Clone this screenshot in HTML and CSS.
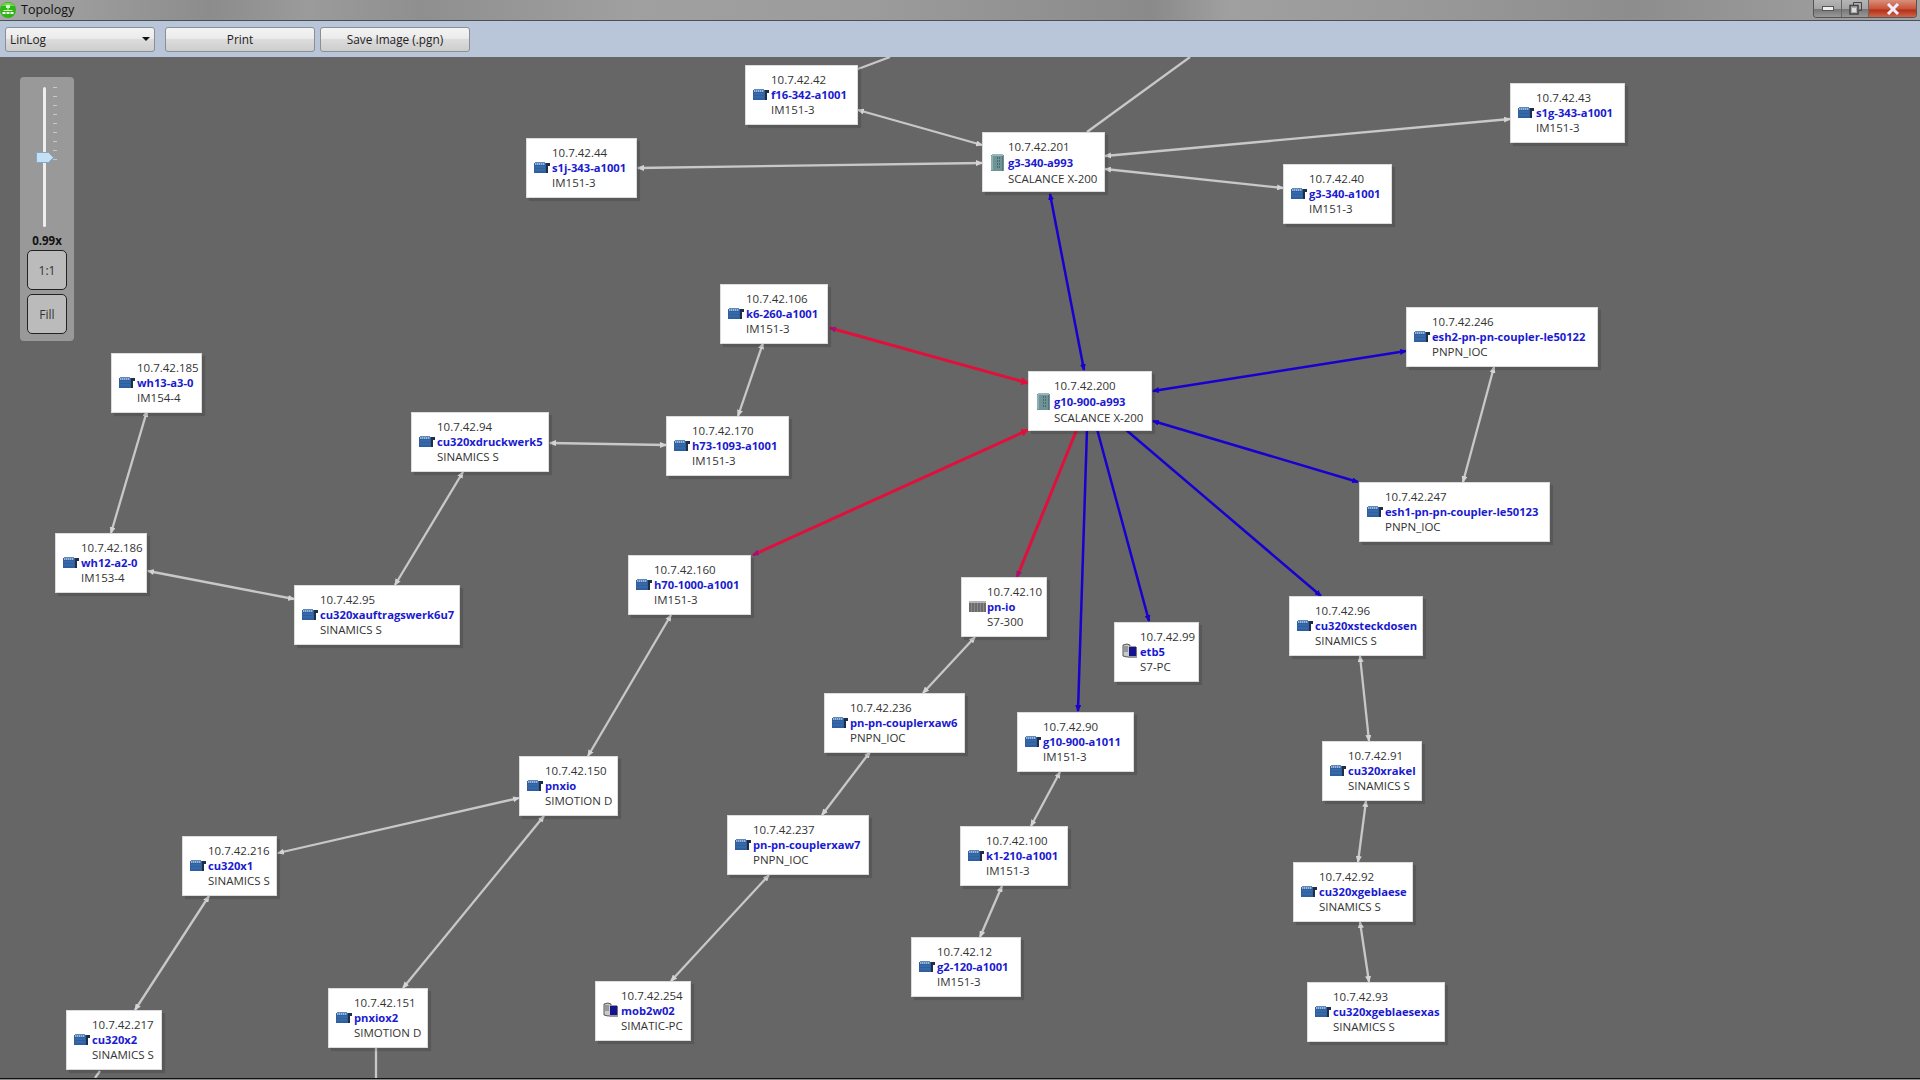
FILE: index.html
```html
<!DOCTYPE html>
<html>
<head>
    <meta charset="utf-8">
    <title>Topology</title>
    <link rel="stylesheet" href="styles.css">
</head>
<body>
<svg class="defs" width="0" height="0">
    <symbol id="ico-drive" viewBox="0 0 16 11">
        <rect x="0" y="1" width="12" height="10" fill="#2f5f9e"/>
        <rect x="1" y="0" width="10" height="3" fill="#5f88bd"/>
        <path d="M1 2h1M3 2h1M5 2h1M7 2h1M9 2h1" stroke="#dfe8f4" stroke-width="1"/>
        <path d="M1 5h10M1 8h10" stroke="#3f75b5" stroke-width="1"/>
        <path d="M12 1h4v3h-2v7h-2z" fill="#1d2f47"/>
    </symbol>
    <symbol id="ico-switch" viewBox="0 0 13 17">
        <rect x="0" y="1" width="13" height="16" fill="#6f9498"/>
        <rect x="1" y="0" width="11" height="2" fill="#9ab6b8"/>
        <path d="M1 2v14" stroke="#8fb0b3" stroke-width="2"/>
        <path d="M6 4h4M6 7h4M6 10h4M6 13h4" stroke="#2f3f42" stroke-width="1" stroke-dasharray="1 1"/>
        <path d="M11.5 2v15" stroke="#55767a" stroke-width="1"/>
    </symbol>
    <symbol id="ico-rack" viewBox="0 0 17 11">
        <rect x="0" y="0" width="17" height="11" fill="#8a8a8a"/>
        <path d="M1 2v9M4 2v9M7 2v9M10 2v9M13 2v9M16 2v9" stroke="#4f4f4f" stroke-width="1"/>
        <rect x="0" y="0" width="17" height="2" fill="#b5b5b5"/>
    </symbol>
    <symbol id="ico-pc" viewBox="0 0 16 16">
        <path d="M1 2l4-1 3 1v11l-3 1-4-1z" fill="#c9c9c9" stroke="#555" stroke-width="1"/>
        <path d="M2 4h4M2 6h4M2 8h4" stroke="#666" stroke-width="1"/>
        <rect x="7" y="4" width="7" height="9" fill="#14148c"/>
        <path d="M7 3h7v1H7zM6 13h9v2H6z" fill="#9a9a9a"/>
        <path d="M14.500 4v9" stroke="#777" stroke-width="1"/>
    </symbol>
</svg>

<header class="titlebar">
    <svg class="titlebar__icon" width="16" height="17" viewBox="0 0 16 17">
        <circle cx="8" cy="9" r="8" fill="#2fb516"/>
        <path d="M1.500 5a8 8 0 0 1 13 0z" fill="#6fdc48"/>
        <rect x="6" y="4" width="4" height="3" fill="#d8f5cc"/>
        <path d="M8 7v2M3.500 9.500h9" stroke="#d8f5cc" stroke-width="1"/>
        <path d="M2.500 11h3v2h-3zM6.500 11h3v2h-3zM10.500 11h3v2h-3z" fill="#f2fff0"/>
    </svg>
    <span class="titlebar__text">Topology</span>
    <div class="window-buttons">
        <div class="window-button">
            <svg width="12" height="5" viewBox="0 0 12 5"><rect x="0.500" y="0.500" width="11" height="4" fill="#eee" stroke="#555"/></svg>
        </div>
        <div class="window-button window-button--restore">
            <svg width="13" height="13" viewBox="0 0 13 13"><path d="M4.500 3V.5h8v8H10" fill="none" stroke="#444"/><rect x="1" y="3.500" width="8" height="8.500" fill="#aaa" stroke="#444" stroke-width="1.500"/><rect x="3" y="6" width="4" height="4" fill="#ddd"/></svg>
        </div>
        <div class="window-button window-button--close">
            <svg width="14" height="12" viewBox="0 0 14 12"><path d="M2 1l10 10M12 1L2 11" stroke="#eef" stroke-width="3"/></svg>
        </div>
    </div>
</header>

<nav class="toolbar">
    <div class="toolbar__combo">
        <span>LinLog</span>
        <span class="toolbar__caret"></span>
    </div>
    <div class="toolbar__button">Print</div>
    <div class="toolbar__button">Save Image (.pgn)</div>
</nav>

<main class="canvas">
    <svg class="edges" width="1920" height="1021" viewBox="0 57 1920 1021">
        <defs>
            <marker id="arrow-gray" viewBox="0 0 7 6" refX="6" refY="3" markerUnits="userSpaceOnUse" markerWidth="7" markerHeight="6" orient="auto-start-reverse"><path d="M0 0L7 3L0 6z" fill="#d4d4d4"/></marker>
            <marker id="arrow-blue" viewBox="0 0 7 6" refX="6" refY="3" markerUnits="userSpaceOnUse" markerWidth="7" markerHeight="6" orient="auto-start-reverse"><path d="M0 0L7 3L0 6z" fill="#1800d0"/></marker>
            <marker id="arrow-red" viewBox="0 0 8 8" refX="7" refY="4" markerUnits="userSpaceOnUse" markerWidth="8" markerHeight="8" orient="auto-start-reverse"><path d="M0 0L8 4L0 8z" fill="#e0103c"/></marker>
            <marker id="arrow-purple" viewBox="0 0 7 6" refX="6" refY="3" markerUnits="userSpaceOnUse" markerWidth="7" markerHeight="6" orient="auto-start-reverse"><path d="M0 0L7 3L0 6z" fill="#a01078"/></marker>
        </defs>
        <g class="edges__group edges__group--gray" marker-start="url(#arrow-gray)" marker-end="url(#arrow-gray)">
            <line x1="858" y1="110" x2="982" y2="145"/>
            <line x1="638" y1="168" x2="982" y2="163"/>
            <line x1="1105" y1="156" x2="1510" y2="119"/>
            <line x1="1105" y1="169" x2="1283" y2="188"/>
            <line x1="763" y1="343" x2="738" y2="416"/>
            <line x1="666" y1="445" x2="550" y2="443"/>
            <line x1="463" y1="472" x2="395" y2="585"/>
            <line x1="147" y1="411" x2="111" y2="533"/>
            <line x1="148" y1="571" x2="294" y2="599"/>
            <line x1="671" y1="615" x2="588" y2="756"/>
            <line x1="519" y1="798" x2="278" y2="853"/>
            <line x1="544" y1="816" x2="403" y2="988"/>
            <line x1="975" y1="637" x2="923" y2="693"/>
            <line x1="870" y1="752" x2="822" y2="815"/>
            <line x1="769" y1="875" x2="671" y2="981"/>
            <line x1="1060" y1="772" x2="1031" y2="826"/>
            <line x1="1002" y1="886" x2="980" y2="937"/>
            <line x1="1360" y1="656" x2="1369" y2="741"/>
            <line x1="1366" y1="801" x2="1358" y2="862"/>
            <line x1="1360" y1="922" x2="1369" y2="982"/>
            <line x1="1494" y1="367" x2="1463" y2="482"/>
            <line x1="209" y1="896" x2="135" y2="1010"/>
        </g>
        <g class="edges__group edges__group--gray">
            <line x1="858" y1="69" x2="890" y2="57"/>
            <line x1="1087" y1="132" x2="1190" y2="57"/>
            <line x1="100" y1="1071" x2="95" y2="1078"/>
            <line x1="376" y1="1047" x2="376" y2="1078"/>
        </g>
        <g class="edges__group edges__group--blue" marker-start="url(#arrow-blue)" marker-end="url(#arrow-blue)">
            <line x1="1050" y1="194" x2="1084" y2="370"/>
            <line x1="1153" y1="391" x2="1406" y2="351"/>
            <line x1="1153" y1="421" x2="1358" y2="482"/>
        </g>
        <g class="edges__group edges__group--blue" marker-end="url(#arrow-blue)">
            <line x1="1125" y1="429" x2="1321" y2="596"/>
            <line x1="1097" y1="429" x2="1149" y2="621"/>
            <line x1="1087" y1="429" x2="1078" y2="711"/>
        </g>
        <g class="edges__group edges__group--red" marker-start="url(#arrow-red)" marker-end="url(#arrow-purple)">
            <line x1="1028" y1="383" x2="830" y2="328"/>
            <line x1="1028" y1="430" x2="753" y2="555"/>
        </g>
        <g class="edges__group edges__group--red" marker-end="url(#arrow-purple)">
            <line x1="1077" y1="429" x2="1017" y2="577"/>
        </g>
    </svg>

    <div class="node" style="left:745px;top:8px;width:113px"><div>10.7.42.42</div><div class="node__name"><svg class="node__icon"><use href="#ico-drive"/></svg>f16-342-a1001</div><div>IM151-3</div></div>
    <div class="node" style="left:526px;top:81px;width:111px"><div>10.7.42.44</div><div class="node__name"><svg class="node__icon"><use href="#ico-drive"/></svg>s1j-343-a1001</div><div>IM151-3</div></div>
    <div class="node" style="left:982px;top:75px;width:123px"><div>10.7.42.201</div><div class="node__name"><svg class="node__icon node__icon--switch"><use href="#ico-switch"/></svg>g3-340-a993</div><div>SCALANCE X-200</div></div>
    <div class="node" style="left:1510px;top:26px;width:115px"><div>10.7.42.43</div><div class="node__name"><svg class="node__icon"><use href="#ico-drive"/></svg>s1g-343-a1001</div><div>IM151-3</div></div>
    <div class="node" style="left:1283px;top:107px;width:109px"><div>10.7.42.40</div><div class="node__name"><svg class="node__icon"><use href="#ico-drive"/></svg>g3-340-a1001</div><div>IM151-3</div></div>
    <div class="node" style="left:720px;top:227px;width:108px"><div>10.7.42.106</div><div class="node__name"><svg class="node__icon"><use href="#ico-drive"/></svg>k6-260-a1001</div><div>IM151-3</div></div>
    <div class="node" style="left:1028px;top:314px;width:124px"><div>10.7.42.200</div><div class="node__name"><svg class="node__icon node__icon--switch"><use href="#ico-switch"/></svg>g10-900-a993</div><div>SCALANCE X-200</div></div>
    <div class="node" style="left:1406px;top:250px;width:192px"><div>10.7.42.246</div><div class="node__name"><svg class="node__icon"><use href="#ico-drive"/></svg>esh2-pn-pn-coupler-le50122</div><div>PNPN_IOC</div></div>
    <div class="node" style="left:1359px;top:425px;width:191px"><div>10.7.42.247</div><div class="node__name"><svg class="node__icon"><use href="#ico-drive"/></svg>esh1-pn-pn-coupler-le50123</div><div>PNPN_IOC</div></div>
    <div class="node" style="left:111px;top:296px;width:91px"><div>10.7.42.185</div><div class="node__name"><svg class="node__icon"><use href="#ico-drive"/></svg>wh13-a3-0</div><div>IM154-4</div></div>
    <div class="node" style="left:411px;top:355px;width:138px"><div>10.7.42.94</div><div class="node__name"><svg class="node__icon"><use href="#ico-drive"/></svg>cu320xdruckwerk5</div><div>SINAMICS S</div></div>
    <div class="node" style="left:666px;top:359px;width:123px"><div>10.7.42.170</div><div class="node__name"><svg class="node__icon"><use href="#ico-drive"/></svg>h73-1093-a1001</div><div>IM151-3</div></div>
    <div class="node" style="left:55px;top:476px;width:92px"><div>10.7.42.186</div><div class="node__name"><svg class="node__icon"><use href="#ico-drive"/></svg>wh12-a2-0</div><div>IM153-4</div></div>
    <div class="node" style="left:294px;top:528px;width:166px"><div>10.7.42.95</div><div class="node__name"><svg class="node__icon"><use href="#ico-drive"/></svg>cu320xauftragswerk6u7</div><div>SINAMICS S</div></div>
    <div class="node" style="left:628px;top:498px;width:123px"><div>10.7.42.160</div><div class="node__name"><svg class="node__icon"><use href="#ico-drive"/></svg>h70-1000-a1001</div><div>IM151-3</div></div>
    <div class="node" style="left:961px;top:520px;width:86px"><div>10.7.42.10</div><div class="node__name"><svg class="node__icon node__icon--rack"><use href="#ico-rack"/></svg>pn-io</div><div>S7-300</div></div>
    <div class="node" style="left:1114px;top:565px;width:85px"><div>10.7.42.99</div><div class="node__name"><svg class="node__icon node__icon--pc"><use href="#ico-pc"/></svg>etb5</div><div>S7-PC</div></div>
    <div class="node" style="left:1289px;top:539px;width:134px"><div>10.7.42.96</div><div class="node__name"><svg class="node__icon"><use href="#ico-drive"/></svg>cu320xsteckdosen</div><div>SINAMICS S</div></div>
    <div class="node" style="left:824px;top:636px;width:141px"><div>10.7.42.236</div><div class="node__name"><svg class="node__icon"><use href="#ico-drive"/></svg>pn-pn-couplerxaw6</div><div>PNPN_IOC</div></div>
    <div class="node" style="left:1017px;top:655px;width:117px"><div>10.7.42.90</div><div class="node__name"><svg class="node__icon"><use href="#ico-drive"/></svg>g10-900-a1011</div><div>IM151-3</div></div>
    <div class="node" style="left:1322px;top:684px;width:100px"><div>10.7.42.91</div><div class="node__name"><svg class="node__icon"><use href="#ico-drive"/></svg>cu320xrakel</div><div>SINAMICS S</div></div>
    <div class="node" style="left:519px;top:699px;width:99px"><div>10.7.42.150</div><div class="node__name"><svg class="node__icon"><use href="#ico-drive"/></svg>pnxio</div><div>SIMOTION D</div></div>
    <div class="node" style="left:182px;top:779px;width:95px"><div>10.7.42.216</div><div class="node__name"><svg class="node__icon"><use href="#ico-drive"/></svg>cu320x1</div><div>SINAMICS S</div></div>
    <div class="node" style="left:727px;top:758px;width:142px"><div>10.7.42.237</div><div class="node__name"><svg class="node__icon"><use href="#ico-drive"/></svg>pn-pn-couplerxaw7</div><div>PNPN_IOC</div></div>
    <div class="node" style="left:960px;top:769px;width:108px"><div>10.7.42.100</div><div class="node__name"><svg class="node__icon"><use href="#ico-drive"/></svg>k1-210-a1001</div><div>IM151-3</div></div>
    <div class="node" style="left:1293px;top:805px;width:120px"><div>10.7.42.92</div><div class="node__name"><svg class="node__icon"><use href="#ico-drive"/></svg>cu320xgeblaese</div><div>SINAMICS S</div></div>
    <div class="node" style="left:911px;top:880px;width:110px"><div>10.7.42.12</div><div class="node__name"><svg class="node__icon"><use href="#ico-drive"/></svg>g2-120-a1001</div><div>IM151-3</div></div>
    <div class="node" style="left:328px;top:931px;width:100px"><div>10.7.42.151</div><div class="node__name"><svg class="node__icon"><use href="#ico-drive"/></svg>pnxiox2</div><div>SIMOTION D</div></div>
    <div class="node" style="left:595px;top:924px;width:96px"><div>10.7.42.254</div><div class="node__name"><svg class="node__icon node__icon--pc"><use href="#ico-pc"/></svg>mob2w02</div><div>SIMATIC-PC</div></div>
    <div class="node" style="left:66px;top:953px;width:96px"><div>10.7.42.217</div><div class="node__name"><svg class="node__icon"><use href="#ico-drive"/></svg>cu320x2</div><div>SINAMICS S</div></div>
    <div class="node" style="left:1307px;top:925px;width:138px"><div>10.7.42.93</div><div class="node__name"><svg class="node__icon"><use href="#ico-drive"/></svg>cu320xgeblaesexas</div><div>SINAMICS S</div></div>

    <aside class="zoom">
        <div class="zoom__slider">
            <div class="zoom__track"></div>
            <svg class="zoom__thumb" width="18" height="11" viewBox="0 0 18 11"><path d="M.5.5h12l5 5-5 5H.5z" fill="#c5e0f5" stroke="#7fa8c8"/></svg>
            <div class="zoom__ticks">
                <i></i><i></i><i></i><i></i><i></i><i></i><i></i><i></i><i></i>
            </div>
        </div>
        <div class="zoom__value">0.99x</div>
        <div class="zoom__button">1:1</div>
        <div class="zoom__button">Fill</div>
    </aside>
</main>
<footer class="bottom-edge"></footer>
</body>
</html>
```

FILE: styles.css
```css
* {
    box-sizing: border-box;
}

html, body {
    margin: 0;
    padding: 0;
}

body {
    width: 1920px;
    height: 1080px;
    overflow: hidden;
    display: flex;
    flex-direction: column;
    font-family: "Open Sans", "Noto Sans", sans-serif;
    font-size: 12px;
    color: #222;
    background: #666;
}

.defs {
    position: absolute;
}

.titlebar {
    height: 21px;
    flex: none;
    display: flex;
    align-items: flex-start;
    border-bottom: 1px solid #4a5058;
    background: linear-gradient(90deg, #a8a8a8 0, #9a9a9a 5%, #8c8c8c 11%, #9b9b9b 16%, #8f8f8f 22%, #a0a0a0 33%, #9c9c9c 45%, #8a8a8a 60%, #a0a0a0 64%, #989898 75%, #8d8d8d 85%, #a3a3a3 100%);
}

.titlebar__icon {
    margin: 1px 0 0 0;
}

.titlebar__text {
    margin-left: 5px;
    font-size: 12.5px;
    line-height: 20px;
    color: #111;
}

.window-buttons {
    display: flex;
    margin-left: auto;
    margin-right: 3px;
    height: 18px;
    border: 1px solid #555;
    border-top: 0;
    border-radius: 0 0 4px 4px;
    overflow: hidden;
}

.window-button {
    width: 28px;
    display: flex;
    align-items: center;
    justify-content: center;
    border-right: 1px solid #666;
    background: linear-gradient(#b5b5b5, #a5a5a5 50%, #777 55%, #999);
}

.window-button--restore {
    width: 27px;
}

.window-button--close {
    width: 47px;
    border-right: 0;
    background: linear-gradient(#d98f7c, #c9553a 50%, #b23218 60%, #d0654a);
}

.toolbar {
    height: 36px;
    flex: none;
    display: flex;
    align-items: center;
    padding-left: 5px;
    background: #b9c6d9;
    font-size: 11.8px;
}

.toolbar__combo,
.toolbar__button {
    height: 25px;
    width: 150px;
    display: flex;
    align-items: center;
    border: 1px solid #8a8f96;
    border-radius: 3px;
    background: linear-gradient(#f4f4f4, #ebebeb 45%, #dcdcdc 50%, #cdcdcd);
}

.toolbar__combo {
    justify-content: space-between;
    padding: 0 4px;
    margin-right: 10px;
}

.toolbar__caret {
    border-left: 4px solid transparent;
    border-right: 4px solid transparent;
    border-top: 4px solid #111;
}

.toolbar__button {
    justify-content: center;
    margin-right: 5px;
}

.canvas {
    position: relative;
    flex: 1;
    overflow: hidden;
    background: #666;
}

.edges {
    position: absolute;
    left: 0;
    top: 0;
}

.edges__group {
    stroke-width: 2;
    fill: none;
}

.edges__group--gray {
    stroke: #c8c8c8;
    stroke-width: 2.3;
}

.edges__group--blue {
    stroke: #1800d0;
    stroke-width: 2.5;
}

.edges__group--red {
    stroke: #e0103c;
    stroke-width: 3;
}

.node {
    position: absolute;
    height: 60px;
    padding: 6px 0 0 25px;
    line-height: 15.2px;
    font-size: 11.5px;
    white-space: nowrap;
    color: #333;
    background: #fff;
    border: 1px solid #dcdcdc;
    box-shadow: 3px 3px 1px rgba(0, 0, 0, .13);
}

.node__name {
    display: flex;
    align-items: center;
    font-size: 11.2px;
    font-weight: 700;
    color: #1a1ad0;
}

.node__icon {
    flex: none;
    width: 16px;
    height: 11px;
    margin-left: -18px;
    margin-right: 2px;
}

.node__icon--switch {
    width: 13px;
    height: 17px;
    margin-left: -17px;
    margin-right: 4px;
}

.node__icon--rack {
    width: 17px;
    margin-left: -18px;
    margin-right: 1px;
}

.node__icon--pc {
    height: 16px;
    margin-top: -2px;
}

.zoom {
    position: absolute;
    left: 20px;
    top: 20px;
    width: 54px;
    height: 264px;
    padding-top: 10px;
    display: flex;
    flex-direction: column;
    align-items: center;
    background: #999;
    border-radius: 4px;
}

.zoom__slider {
    position: relative;
    width: 54px;
    height: 140px;
    flex: none;
}

.zoom__track {
    position: absolute;
    left: 23px;
    top: 0;
    width: 3px;
    height: 140px;
    background: #eee;
    border-radius: 2px;
}

.zoom__thumb {
    position: absolute;
    left: 16px;
    top: 65px;
}

.zoom__ticks {
    position: absolute;
    left: 33px;
    top: 0;
    height: 140px;
    display: flex;
    flex-direction: column;
    justify-content: flex-start;
}

.zoom__ticks i {
    display: block;
    width: 4px;
    height: 1px;
    margin-bottom: 8px;
    background: #c8c8c8;
}

.zoom__value {
    margin-top: 7px;
    margin-bottom: 2px;
    font-size: 11.5px;
    font-weight: 700;
    line-height: 14px;
    color: #111;
}

.zoom__button {
    flex: none;
    width: 40px;
    height: 40px;
    margin-bottom: 4px;
    display: flex;
    align-items: center;
    justify-content: center;
    border: 1px solid #222;
    border-radius: 5px;
    background: #bbb;
    color: #333;
}

.bottom-edge {
    height: 2px;
    flex: none;
    border-top: 1px solid #111;
    background: #888;
}
```
